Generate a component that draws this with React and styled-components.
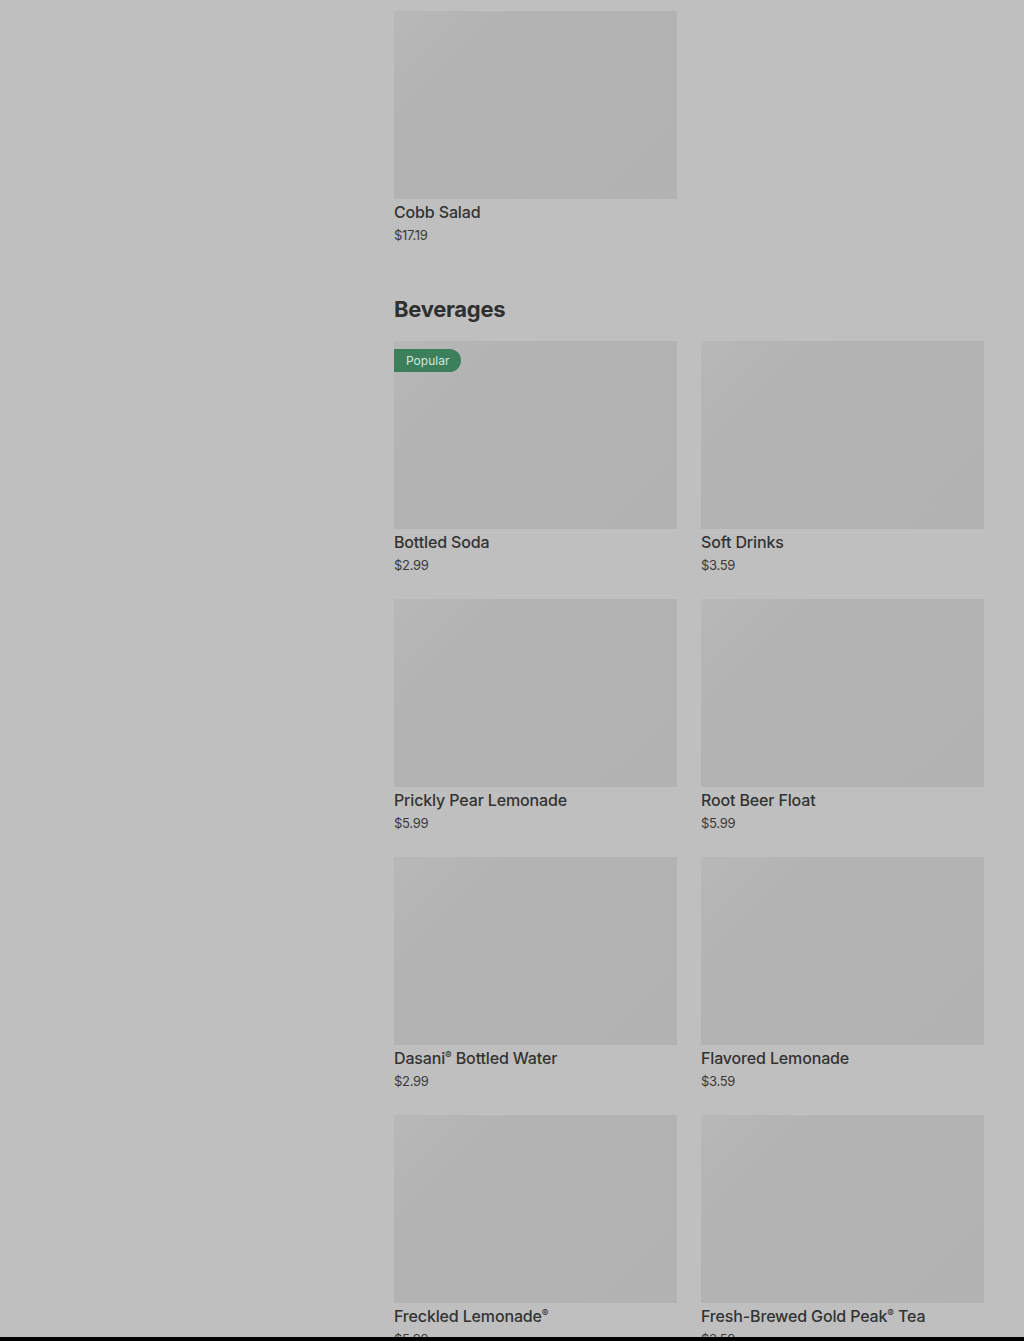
import React from "react";
import styled, { createGlobalStyle } from "styled-components";

const Global = createGlobalStyle`
  body {
    margin: 0;
    background: #bfbfbf;
    font-family: Inter, "Noto Sans", sans-serif;
    color: #333333;
  }
`;

const Page = styled.div`
  display: flex;
  padding-top: 11px;
`;

const Sidebar = styled.aside`
  width: 394px;
  flex-shrink: 0;
`;

const Main = styled.main`
  width: 590px;
  display: flex;
  flex-direction: column;
  gap: 50px;
`;

const Section = styled.section`
  display: flex;
  flex-direction: column;
  gap: 18px;
`;

const Heading = styled.h2`
  margin: 0;
  font-size: 22px;
  line-height: 28px;
  font-weight: 700;
  letter-spacing: -0.3px;
  color: #2f2f2f;
`;

const Grid = styled.div`
  display: grid;
  grid-template-columns: 283px 283px;
  column-gap: 24px;
  row-gap: 24px;
`;

const Card = styled.div`
  display: flex;
  flex-direction: column;
`;

const Thumb = styled.div`
  position: relative;
  height: 188px;
  background: linear-gradient(135deg, #b8b8b8 0%, #b3b3b3 25%, #b2b2b2 100%);
`;

const Badge = styled.span`
  position: absolute;
  top: 8px;
  left: 0;
  height: 23px;
  padding: 0 12px;
  display: flex;
  align-items: center;
  border-radius: 0 12px 12px 0;
  background: #3b7f5b;
  color: #d6e6db;
  font-size: 12px;
`;

const Name = styled.div`
  margin-top: 2px;
  font-size: 16px;
  line-height: 22px;
  font-weight: 500;
  letter-spacing: -0.15px;
  color: #333333;
`;

const Mark = styled.span`
  font-size: 10px;
  vertical-align: 5px;
  line-height: 0;
`;

const Price = styled.div`
  margin-top: 2px;
  font-size: 13px;
  line-height: 20px;
  letter-spacing: -0.3px;
  color: #3a3a3a;
`;

const BottomBar = styled.div`
  position: fixed;
  left: 0;
  right: 0;
  bottom: 0;
  height: 4px;
  background: #000;
`;

const salads = [{ name: "Cobb Salad", price: "$17.19" }];

const beverages = [
  { name: "Bottled Soda", price: "$2.99", popular: true },
  { name: "Soft Drinks", price: "$3.59" },
  { name: "Prickly Pear Lemonade", price: "$5.99" },
  { name: "Root Beer Float", price: "$5.99" },
  { name: "Dasani® Bottled Water", price: "$2.99" },
  { name: "Flavored Lemonade", price: "$3.59" },
  { name: "Freckled Lemonade®", price: "$5.99" },
  { name: "Fresh-Brewed Gold Peak® Tea", price: "$3.59" },
];

// render the ® sign small and raised, as on the menu
const withMarks = (text) =>
  text.split("®").flatMap((part, i) =>
    i === 0 ? [part] : [<Mark key={i}>®</Mark>, part]
  );

const Item = ({ name, price, popular }) => (
  <Card>
    <Thumb>{popular && <Badge>Popular</Badge>}</Thumb>
    <Name>{withMarks(name)}</Name>
    <Price>{price}</Price>
  </Card>
);

const App = () => {
  return (
    <>
      <Global />
      <Page>
        <Sidebar />
        <Main>
          <Grid>
            {salads.map((item) => (
              <Item key={item.name} {...item} />
            ))}
          </Grid>
          <Section>
            <Heading>Beverages</Heading>
            <Grid>
              {beverages.map((item) => (
                <Item key={item.name} {...item} />
              ))}
            </Grid>
          </Section>
        </Main>
      </Page>
      <BottomBar />
    </>
  );
};

export default App;
